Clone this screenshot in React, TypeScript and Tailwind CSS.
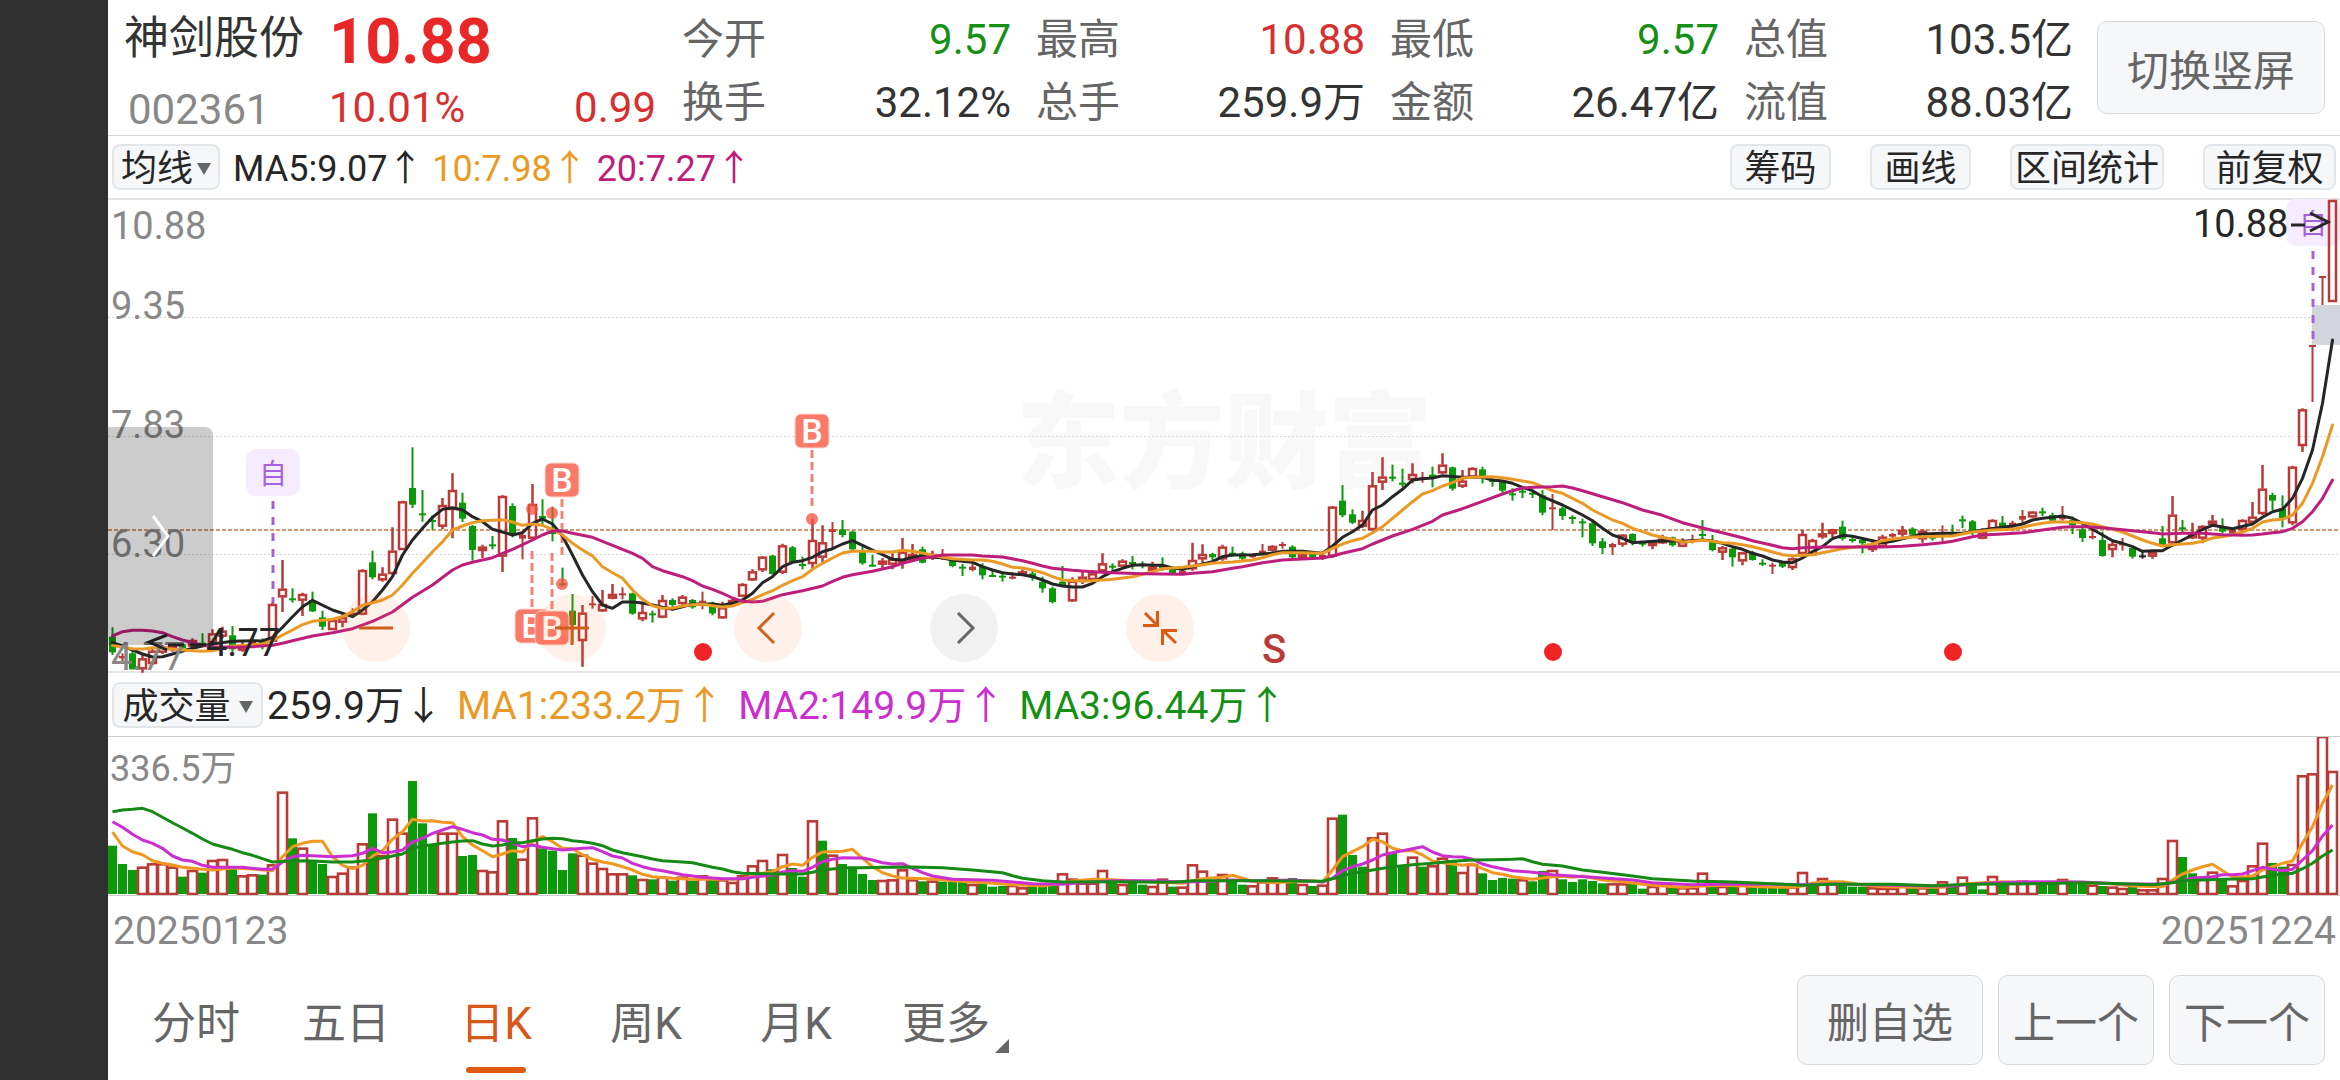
import React from "react";

/* Daily candles: colour (r/g/k), then high, body top, body bottom and low, in chart units (three per pixel). */
const CANDLES = `
g682,710,757,765 r760,768,775,790 g745,760,808,808 r760,775,808,818 r740,752,792,795 r735,740,758,762 r730,736,750,755 g728,733,745,750
r715,720,740,745 g700,728,735,740 r688,700,730,740 r680,692,710,715 g678,706,748,755 r720,738,752,755 r715,725,735,740 g715,722,740,748
r608,612,725,725 r480,566,592,636 g565,595,600,608 r578,582,602,648 g575,600,634,636 g632,652,680,690 r655,660,690,690 r645,652,668,682
r625,638,646,650 r508,510,644,646 g452,487,532,538 r502,521,541,545 r382,452,522,525 r302,304,450,450 g142,264,314,324 g270,340,346,365
g346,360,366,390 r294,315,380,388 r220,270,330,415 g278,308,356,366 g375,378,450,482 r434,440,453,474 g408,433,438,448 r286,288,470,516
g310,318,405,412 r400,405,416,478 r252,312,416,418 g298,348,356,380 g320,396,402,424 g503,550,556,560 g582,632,675,728 r615,638,723,800
r588,610,616,626 r570,612,634,636 r552,582,596,598 r562,580,586,598 g578,580,641,644 r610,636,658,664 g632,640,645,668 r585,600,653,655
g595,600,615,625 r585,590,612,615 g597,600,622,626 r575,602,606,628 g605,608,640,646 r605,622,655,656 r594,600,612,612 r550,552,590,592
r508,514,541,543 r468,470,511,516 g465,467,522,524 r431,436,518,522 g438,442,486,488 g470,492,498,508 r357,420,492,505 r376,427,473,486
r366,388,396,446 g360,388,405,412 g392,395,448,450 g440,456,490,494 g464,494,499,500 r474,482,494,510 r460,476,494,508 r414,455,488,506
r432,462,480,484 g440,448,488,490 r452,462,476,480 r447,464,474,480 g475,480,498,502 g492,500,504,528 r488,500,510,514 g490,500,526,538
g510,525,530,531 g518,527,531,545 r516,530,534,538 r508,514,526,528 g512,520,532,542 g530,545,565,578 g560,565,606,610 g498,545,558,562
r532,542,604,606 r516,530,545,552 r510,520,540,545 r460,490,514,520 g490,497,501,510 r478,482,500,505 g468,486,492,508 g484,492,498,505
r485,500,512,520 g472,498,504,512 g500,502,520,522 r505,512,520,524 r428,480,508,512 r433,462,478,488 g458,462,472,480 r434,440,478,482
g440,458,464,470 g455,460,476,480 r462,466,472,474 r432,452,460,466 r436,438,452,458 r426,432,436,446 g436,440,472,474 r455,462,474,478
g455,462,472,476 r455,465,474,480 r318,320,470,474 g255,302,346,352 g328,343,368,372 r332,360,380,384 r216,256,390,392 r172,230,248,270
g194,230,236,244 g206,248,254,262 r190,222,240,250 r216,232,240,248 g200,224,232,262 r160,194,220,222 g200,202,266,272 r210,242,260,264
r202,204,232,234 g200,208,228,250 g234,240,244,260 g240,246,272,278 g265,280,284,302 g262,272,276,294 g268,278,282,294 g270,286,338,346
r282,322,328,390 g320,325,348,360 g346,351,356,372 g356,364,368,412 g358,370,430,438 g414,424,444,462 r428,432,442,465 r402,404,434,440
g400,402,428,436 g424,428,432,440 r420,425,438,448 r404,416,430,432 g410,412,436,440 r415,424,440,442 r404,420,426,430 g360,402,408,418
g405,425,450,454 r438,442,458,480 g440,446,472,500 r455,457,484,496 g452,458,480,482 g478,488,492,498 r488,494,500,522 g484,488,500,504
r472,475,504,510 r390,402,462,465 r416,420,466,468 r368,400,412,416 r386,388,402,412 g362,380,416,422 g412,417,421,428 g415,420,430,460
r425,434,450,456 r404,410,440,442 r399,402,410,414 r378,390,404,410 g382,386,404,408 r388,392,418,428 g400,410,414,422 r376,398,402,426
g374,398,402,408 g347,358,362,384 g360,364,392,406 r385,395,416,418 r358,360,388,392 g348,368,380,384 r362,368,378,394 r330,348,359,370
r333,335,352,354 g323,334,338,348 g338,345,362,364 r318,348,358,362 g350,360,376,402 g376,388,414,426 r385,408,414,418 g395,420,468,470
r426,432,450,472 r414,430,436,452 g440,444,470,476 k452,466,472,476 r450,456,470,476 g378,415,435,440 r288,344,430,440 g360,382,388,400
r368,400,415,418 r376,378,416,430 r345,362,374,378 g355,380,395,400 r385,390,400,402 r358,360,390,392 r306,350,368,372 r195,266,342,346
g278,285,302,330 g286,325,354,382 r197,200,370,376 r25,28,138,156 r-165,-165,-161,6 r-372,-372,-368,-285 r-600,-600,-294,-294`;

const MA5 = `0,728 1,738 2,750 3,762 4,771 5,770 6,762 8,745 9,738 10,732 12,724 14,722 15,723 16,712 17,682 18,650 19,620 20,601 22,630 24,650 25,630 26,605 27,570 28,530 29,465 30,420 31,385 32,352 33,328 34,323 35,330 36,350 37,365 38,388 39,396 40,405 41,398 42,370 43,357 44,372 45,408 46,465 47,525 48,575 49,615 50,625 51,606 52,606 53,609 54,615 55,622 56,628 57,620 58,612 60,612 61,616 62,610 63,600 64,580 65,548 66,530 67,500 68,487 69,482 70,472 71,455 72,446 73,432 74,422 75,436 76,450 77,464 78,478 79,480 80,472 81,468 82,470 83,474 84,480 85,484 86,487 87,500 88,510 89,518 90,522 91,524 92,530 93,540 94,552 95,558 96,561 97,561 98,550 99,530 100,515 101,505 102,496 103,494 104,496 105,496 106,504 107,508 108,500 109,492 110,485 111,470 112,465 114,464 116,460 117,454 119,454 121,460 122,438 123,412 124,395 125,375 126,330 127,315 128,290 129,268 130,240 131,236 132,234 133,227 135,232 137,232 138,240 139,243 140,250 141,262 142,272 143,290 145,315 147,345 148,362 149,385 150,405 151,415 152,428 153,426 155,422 157,424 159,420 160,423 161,430 162,440 163,448 164,460 165,468 166,480 167,486 168,488 169,474 170,455 171,440 172,416 173,406 174,409 176,422 177,428 178,424 179,416 181,402 183,400 185,400 187,390 189,382 190,378 191,372 192,360 193,355 194,352 195,348 196,355 197,370 198,388 199,405 200,422 201,430 202,440 203,454 204,452 205,452 206,435 207,420 208,405 209,388 210,376 212,386 214,372 215,352 216,335 217,328 218,295 219,235 220,150 221,10 222,-180`;

const MA10 = `0,736 1,742 2,746 3,747 4,744 5,744 6,748 8,752 9,754 10,752 12,738 14,735 15,732 16,722 17,705 18,690 19,674 20,664 22,658 23,650 24,635 25,616 26,608 27,600 28,585 29,555 30,520 31,488 32,455 33,425 34,390 35,378 36,368 37,362 39,359 40,366 41,376 42,372 43,376 44,388 45,405 46,430 47,450 48,468 49,500 50,518 51,535 52,570 53,598 54,617 55,625 56,624 57,618 58,614 59,613 60,617 61,621 62,618 63,608 64,598 65,584 66,572 67,556 68,542 69,530 70,508 71,490 72,474 73,459 74,454 76,454 77,456 78,456 79,451 80,454 81,459 82,466 83,472 84,476 86,480 87,480 88,484 89,492 90,502 91,504 92,510 93,518 94,530 95,540 97,543 98,542 99,540 100,538 101,534 102,530 104,515 105,506 107,502 108,498 109,494 110,490 112,486 114,480 115,473 116,464 117,458 119,458 121,460 122,445 123,432 124,422 125,415 126,398 127,380 128,355 129,330 130,305 131,282 132,272 133,258 134,248 135,234 136,232 138,230 139,233 140,238 141,243 142,248 143,260 144,272 145,280 146,295 147,310 148,330 149,345 150,360 151,370 152,385 153,395 154,405 155,412 156,418 157,426 158,424 159,421 160,424 161,428 162,430 163,434 164,440 165,448 166,456 167,464 168,467 169,466 170,464 171,458 172,452 173,446 175,438 176,432 177,422 178,417 180,411 181,410 184,408 186,396 188,390 190,388 191,382 192,375 193,370 194,366 196,366 197,368 198,372 199,380 200,388 201,396 202,408 203,420 204,430 205,438 206,434 208,430 209,424 210,414 211,410 212,404 213,396 214,385 215,366 216,360 217,358 218,345 219,310 220,250 221,170 222,75`;

const MA20 = `0,708 1,695 2,691 3,691 4,693 5,698 6,710 7,720 8,728 9,736 10,740 12,742 14,740 16,736 17,730 18,722 20,708 22,698 24,686 26,664 28,636 30,592 32,555 34,510 35,495 36,487 38,473 40,448 42,420 43,405 44,393 45,393 46,400 48,412 50,436 52,460 53,475 54,500 55,512 57,530 58,542 59,558 60,568 61,580 62,594 63,604 64,606 65,604 66,594 67,584 69,572 71,558 72,544 73,532 74,524 76,514 78,500 79,490 80,482 81,474 82,470 83,465 86,465 87,468 89,471 91,482 92,490 93,498 94,505 96,511 98,515 100,518 103,521 107,523 108,520 110,515 112,505 113,500 115,488 117,480 119,477 121,474 122,468 123,460 125,446 126,432 128,408 130,388 132,364 133,345 135,326 137,304 139,282 140,272 141,264 142,262 144,260 145,258 146,264 147,272 149,290 151,308 153,330 155,346 157,368 159,384 161,398 163,413 164,422 166,436 167,443 168,446 169,443 171,441 175,441 177,441 179,439 181,434 183,428 184,424 186,410 187,405 189,402 191,398 193,390 195,382 196,380 197,380 198,381 200,386 202,392 204,398 205,402 207,400 209,400 211,404 213,406 214,405 215,402 216,398 217,395 218,385 219,365 220,335 221,295 222,240`;

/* Daily volume: colour and bar top. */
const VOLUMES = `g497 g552 g570 r560 r550 r550 r560 g590 r570 g578 r540 r537 g560 r586 r583 g584 r553 r335 g475 r503 g540 g552 r588 r578 r560 r490 g400 r525 r416 r458 g303 g430 g492 r458 r458 g528 g525 r570 r574 r421 g474 r536 r412 g505 g512 g570 g520 r524 r548 r564 r580 r580 g586 r597 g598 r590 g602 r590 g602 r586 g598 r598 r606 r586 r556 r540 g568 r522 g564 g590 r421 g482 r524 g552 g560 g582 g600 r600 r598 r568 r598 g604 r602 g605 g600 g604 r612 g610 g620 g618 r615 r622 g618 g618 g618 r580 r596 r608 r608 r570 g605 r612 g605 g614 r618 r596 g620 r620 r553 r572 g600 r582 g604 g614 r616 r604 r592 r602 g594 r612 g618 r614 r413 g404 g525 g560 r472 r458 g518 g555 r530 g560 r556 r533 g545 r576 r552 g580 g600 g594 g596 r598 g604 g573 r570 g598 g606 g598 g603 g610 r610 r610 g612 g626 r618 r612 g618 r622 r622 r578 g612 r618 g612 r612 g620 g622 g622 g622 r620 r576 g615 r594 r608 g614 g620 g620 r622 r624 r624 r612 g622 r622 g620 r604 g614 r590 g608 g628 r588 g612 r608 r602 r608 g610 g612 r597 g608 g612 r614 g618 r620 r624 g620 r628 r628 r594 r480 g531 g580 r596 r575 g600 r616 r600 r556 r488 g549 g560 r552 r286 r280 r168 r273`;

const VMA1 = `0,456 1,498 2,515 3,524 4,542 5,550 6,555 7,562 9,568 10,570 12,564 14,567 16,572 17,530 18,500 19,490 20,484 21,484 22,530 23,556 24,566 25,556 26,528 27,512 28,478 29,455 30,418 31,423 32,422 33,427 34,428 35,470 36,495 37,512 38,530 39,522 40,512 41,516 42,485 43,470 44,485 45,505 46,506 47,524 48,538 49,546 50,551 51,560 52,570 53,583 54,590 56,595 58,598 60,598 62,598 63,596 64,588 65,580 66,575 67,560 68,552 69,556 70,532 71,516 72,515 73,514 74,508 75,535 76,560 77,578 78,588 79,594 82,597 84,602 86,606 88,610 90,614 93,618 95,610 96,603 98,598 100,599 102,602 104,606 106,608 107,610 108,602 109,596 111,592 112,586 113,595 114,604 116,608 118,605 120,602 121,606 122,570 123,530 124,515 125,500 126,478 127,485 128,505 129,512 130,512 131,525 132,543 133,548 134,552 135,556 136,552 137,566 138,578 139,583 140,590 141,594 142,598 143,594 144,590 145,589 146,592 147,588 148,594 149,600 151,605 153,613 155,618 157,622 159,618 161,616 163,618 165,620 167,622 168,622 169,618 170,610 171,605 173,605 175,615 177,620 180,622 183,622 185,612 187,608 189,605 192,608 195,606 198,608 200,612 202,618 205,620 206,600 207,582 208,570 209,560 210,553 211,572 212,590 213,592 214,588 215,570 216,560 217,550 218,543 219,490 220,440 221,370 222,315`;

const VMA2 = `0,425 1,442 2,463 3,480 4,490 5,505 6,528 7,540 8,544 9,556 10,562 11,562 13,562 15,568 16,568 17,546 18,530 19,526 22,530 24,527 25,520 26,505 27,518 28,516 29,510 30,486 31,475 32,460 33,450 34,440 35,448 36,458 37,465 38,478 39,480 40,490 41,500 42,495 43,502 44,506 45,510 47,505 48,503 49,515 50,528 51,534 52,550 53,560 54,568 55,572 56,578 57,584 58,588 59,592 61,596 63,596 64,592 66,585 67,576 68,572 69,574 70,562 71,545 72,538 73,533 75,534 76,540 77,548 78,552 79,551 80,565 81,578 82,588 84,598 88,601 90,606 92,611 95,613 97,608 100,602 104,602 107,606 110,604 112,600 114,603 118,600 121,606 122,595 123,572 124,560 125,552 126,540 127,525 128,518 129,512 130,506 131,500 132,516 133,527 134,530 135,531 136,538 137,552 138,560 139,566 140,572 142,577 144,584 146,588 148,592 152,600 154,608 158,614 162,612 166,613 169,614 172,612 176,614 182,618 184,618 188,608 192,605 197,606 201,612 205,612 207,602 208,594 210,590 211,584 212,584 213,582 214,572 215,562 216,568 217,572 218,568 219,540 220,512 221,468 222,435`;

const VMA3 = `0,395 1,390 2,388 3,385 4,395 5,412 6,428 7,444 8,460 9,477 10,492 11,500 12,508 13,518 14,526 15,536 16,546 18,542 20,543 22,546 24,546 26,540 28,528 29,522 30,505 31,498 32,494 33,490 34,486 35,483 36,482 37,492 38,498 39,495 40,488 41,488 42,482 43,477 44,475 45,476 46,482 47,485 48,490 49,497 50,510 51,518 52,524 53,530 54,537 55,542 57,546 58,548 59,555 60,562 61,567 62,575 63,580 65,581 67,582 69,582 70,577 71,570 73,564 75,563 77,562 80,561 83,563 86,570 89,578 90,587 91,595 93,602 95,606 100,605 106,607 108,602 114,602 121,604 122,596 124,580 126,570 128,560 130,554 132,550 134,544 136,540 138,539 140,538 141,536 142,545 143,553 145,558 147,570 149,577 152,588 154,596 158,603 162,606 166,611 169,616 172,613 178,613 182,617 186,613 192,611 197,608 201,611 204,614 206,608 207,602 209,600 211,598 214,596 216,586 218,580 219,566 220,550 221,528 222,510`;

const FONT = "font-[Roboto,'Noto_Sans_CJK_SC',sans-serif]";
const COLORS: Record<string, string> = { r: "#b93a36", g: "#0a9a0a", k: "#222222" };

const xAt = (i: number) => 112.5 + 10 * i;
const line = (data: string, top: number) =>
  data
    .split(" ")
    .map((p) => p.split(",").map(Number))
    .map(([i, v]) => `${xAt(i)},${(top + v / 3).toFixed(1)}`)
    .join(" ");

const candles = CANDLES.trim()
  .split(/\s+/)
  .map((c) => ({ color: c[0], v: c.slice(1).split(",").map((n) => 400 + Number(n) / 3) }));
const volumes = VOLUMES.split(" ").map((c) => ({ color: c[0], top: 680 + Number(c.slice(1)) / 3 }));

function Candle({ i, color, v }: { i: number; color: string; v: number[] }) {
  const [high, top, bottom, low] = v;
  const x = xAt(i);
  const c = COLORS[color];
  const h = bottom - top;
  if (color !== "r" || h < 4) {
    return (
      <g fill={c}>
        <rect x={x - 1} y={high} width={2} height={low - high} />
        <rect x={x - 3.5} y={top} width={7} height={Math.max(h, 2)} />
      </g>
    );
  }
  return (
    <g stroke={c} strokeWidth={2.5} fill="none">
      <path d={`M${x} ${high}V${top}M${x} ${bottom}V${low}`} />
      <rect x={x - 3.5} y={top + 1} width={7} height={h - 2} />
    </g>
  );
}

function SelfMark({ x, y, end }: { x: number; y: number; end: number }) {
  return (
    <g>
      <rect x={x - 27} y={y} width={54} height={47} rx={10} fill="#f5ecff" />
      <text x={x} y={y + 35} textAnchor="middle" fontSize={28} fill="#a463dc">自</text>
      <path d={`M${x} ${y + 52}V${end}`} stroke="#a463dc" strokeWidth={3} strokeDasharray="8 8" />
    </g>
  );
}

function BuyMark({ x, y, from, to, dot }: { x: number; y: number; from: number; to: number; dot: number }) {
  return (
    <g>
      <path d={`M${x} ${from}V${to}`} stroke="#f08575" strokeWidth={3} strokeDasharray="8 4" />
      <circle cx={x} cy={dot} r={6} fill="#f4503c" fillOpacity={0.75} />
      <rect x={x - 17} y={y} width={34} height={34} rx={6} fill="#fb7a69" stroke="#ffd9d2" />
      <text x={x} y={y + 29} textAnchor="middle" fontSize={34} fontWeight={500} fill="#fff">B</text>
    </g>
  );
}

function PriceChart() {
  return (
    <svg viewBox="108 200 2232 471" className="block h-auto w-full overflow-visible" role="img" aria-label="日K线图">
      <text x={1016} y={480} fontSize={104} fontWeight={900} fill="#f8f8f8">东方财富</text>
      <g stroke="#d8d8d8" strokeWidth={1} strokeDasharray="2 2">
        <path d="M108 317.5H2340M108 436.5H2340M108 554.5H2340" />
      </g>
      <path d="M108 530H2340" stroke="#d39a70" strokeWidth={2} strokeDasharray="4 2" />
      <rect x={2312} y={305} width={28} height={40} fill="#d2d5db" />
      <SelfMark x={273} y={449} end={603} />
      <SelfMark x={2313} y={199} end={345} />
      {candles.map((c, i) => (
        <Candle key={i} i={i} color={c.color} v={c.v} />
      ))}
      <BuyMark x={562} y={463} from={499} to={556} dot={584} />
      <BuyMark x={532} y={609} from={551} to={609} dot={509} />
      <BuyMark x={552} y={611} from={553} to={611} dot={513} />
      <BuyMark x={812} y={414} from={450} to={508} dot={519} />
      <g fill="none" strokeWidth={3} strokeLinejoin="round" strokeLinecap="round">
        <polyline points={line(MA5, 400)} stroke="#262626" />
        <polyline points={line(MA10, 400)} stroke="#ea9a24" />
        <polyline points={line(MA20, 400)} stroke="#bd1e7c" />
      </g>
      <g fontSize={38} fill="#888888">
        <text x={111} y={239}>10.88</text>
        <text x={111} y={319}>9.35</text>
        <text x={111} y={438}>7.83</text>
        <text x={111} y={557}>6.30</text>
        <text x={111} y={670}>4.77</text>
      </g>
      <g fontSize={38} fill="#262626">
        <text x={2193} y={237}>10.88</text>
        <text x={206} y={656}>4.77</text>
      </g>
      <g stroke="#262626" strokeWidth={3} fill="none">
        <path d="M2291 225H2305M2310 213L2328 222L2310 231" />
        <path d="M167 635L149 642L167 650M168 645H184M190 645H206" />
      </g>
      <g fill="#f02424">
        <circle cx={703} cy={652} r={9} />
        <circle cx={1553} cy={652} r={9} />
        <circle cx={1953} cy={652} r={9} />
      </g>
      <text x={1274} y={663} textAnchor="middle" fontSize={40} fontWeight={500} fill="#b93a36">S</text>
    </svg>
  );
}

function VolumeChart() {
  return (
    <svg viewBox="108 737 2232 158" className="block h-auto w-full" role="img" aria-label="成交量图">
      {volumes.map((b, i) =>
        b.color === "g" ? (
          <rect key={i} x={xAt(i) - 4.5} y={b.top} width={9} height={894 - b.top} fill={COLORS.g} />
        ) : (
          <rect key={i} x={xAt(i) - 4.5} y={b.top + 1} width={9} height={893 - b.top} fill="#fff" stroke={COLORS.r} strokeWidth={2.6} />
        ),
      )}
      <g fill="none" strokeWidth={3} strokeLinejoin="round">
        <polyline points={line(VMA1, 680)} stroke="#f0981f" />
        <polyline points={line(VMA2, 680)} stroke="#cc2fd0" />
        <polyline points={line(VMA3, 680)} stroke="#158a15" />
      </g>
      <text x={110} y={781} fontSize={36} fill="#888888">336.5万</text>
    </svg>
  );
}

const STATS = [
  ["今开", "9.57", "text-[#159015]"],
  ["最高", "10.88", "text-[#d63030]"],
  ["最低", "9.57", "text-[#159015]"],
  ["总值", "103.5亿", "text-[#333333]"],
  ["换手", "32.12%", "text-[#333333]"],
  ["总手", "259.9万", "text-[#333333]"],
  ["金额", "26.47亿", "text-[#333333]"],
  ["流值", "88.03亿", "text-[#333333]"],
];

const CHIP = "flex h-[46px] shrink-0 items-center justify-center rounded-lg border-2 border-[#e4e7ea] bg-[#f6f7f9] pt-1 text-[36px] leading-none whitespace-nowrap text-[#262626]";
const ACTION = "flex items-center justify-center rounded-[10px] border border-[#d6dadd] bg-[#f6f7f9] pt-2 text-[42px] leading-none whitespace-nowrap text-[#666666]";
const ROUND = "flex size-[68px] items-center justify-center rounded-full";

function Caret() {
  return (
    <svg viewBox="0 0 14 12" className="h-3 w-3.5" fill="#666666" aria-hidden="true">
      <path d="M0 0H14L7 12Z" />
    </svg>
  );
}

function ChartControls() {
  const icon = { viewBox: "0 0 34 34", className: "size-[34px]", fill: "none", strokeWidth: 3, "aria-hidden": true } as const;
  return (
    <div className="absolute bottom-[9px] left-[234px] flex gap-32">
      <button type="button" aria-label="缩小" className={`${ROUND} bg-[#ff6a20]/10`}>
        <svg {...icon} stroke="#d05f1a"><path d="M0 17H34" /></svg>
      </button>
      <button type="button" aria-label="放大" className={`${ROUND} bg-[#ff6a20]/10`}>
        <svg {...icon} stroke="#d05f1a"><path d="M0 17H34M17 0V34" /></svg>
      </button>
      <button type="button" aria-label="左移" className={`${ROUND} bg-[#ff6a20]/10`}>
        <svg {...icon} stroke="#d05f1a"><path d="M23 2L8 17L23 32" /></svg>
      </button>
      <button type="button" aria-label="右移" className={`${ROUND} bg-[#777777]/10`}>
        <svg {...icon} stroke="#666666"><path d="M11 2L26 17L11 32" /></svg>
      </button>
      <button type="button" aria-label="收起" className={`${ROUND} bg-[#ff6a20]/10`}>
        <svg {...icon} stroke="#dd5a10"><path d="M2 2L14 14M0 14.5H14.5V0M33 32L20 19.5M34 19.5H19.5V34" /></svg>
      </button>
    </div>
  );
}

const TABS = ["分时", "五日", "日K", "周K", "月K", "更多"];

export default function App() {
  return (
    <div className={`flex min-h-screen bg-[#303030] ${FONT}`}>
      <main className="ml-[108px] flex min-w-0 flex-1 flex-col bg-white">
        <header className="flex h-[136px] items-start border-b border-[#d4d4d4] pr-[15px]">
          <div className="grid w-[574px] shrink-0 grid-cols-[205px_1fr] pl-4">
            <h1 className="pt-[9px] text-[45px] leading-[60px] text-[#333333]">神剑股份</h1>
            <strong className="pt-3 text-[63px] leading-[60px] font-bold text-[#ea2727]">10.88</strong>
            <span className="pt-3 pl-1 text-[42px] leading-[52px] text-[#888888]">002361</span>
            <span className="flex justify-between pt-[10px] pr-[26px] text-[42px] leading-[52px] text-[#d63030]">
              <span>10.01%</span>
              <span>0.99</span>
            </span>
          </div>
          <dl className="grid flex-1 grid-cols-4 gap-x-[25px] pt-2 text-[42px] leading-[63px]">
            {STATS.map(([label, value, tone]) => (
              <div key={label} className="flex justify-between whitespace-nowrap">
                <dt className="text-[#666666]">{label}</dt>
                <dd className={tone}>{value}</dd>
              </div>
            ))}
          </dl>
          <button type="button" className={`${ACTION} mt-[21px] ml-6 h-[93px] w-[228px]`}>切换竖屏</button>
        </header>

        <section className="flex h-16 items-center justify-between border-b-2 border-[#e4e4e4] pr-1 pl-1">
          <div className="flex items-center text-[36px] leading-none whitespace-nowrap">
            <button type="button" className={`${CHIP} mr-[13px] w-[108px] gap-1`}>均线<Caret /></button>
            <span className="pt-1 text-[#262626]">MA5:9.07↑&nbsp;</span>
            <span className="pt-1 text-[#ea9a24]">10:7.98↑&nbsp;</span>
            <span className="pt-1 text-[#bd1e7c]">20:7.27↑</span>
          </div>
          <div className="flex gap-[39px]">
            <button type="button" className={`${CHIP} w-[101px]`}>筹码</button>
            <button type="button" className={`${CHIP} w-[101px]`}>画线</button>
            <button type="button" className={`${CHIP} w-[154px]`}>区间统计</button>
            <button type="button" className={`${CHIP} w-[133px]`}>前复权</button>
          </div>
        </section>

        <section className="relative border-b-2 border-[#e4e4e4]">
          <PriceChart />
          <ChartControls />
          <button type="button" aria-label="展开侧栏" className="absolute top-[227px] left-0 flex h-[218px] w-[105px] items-center justify-center rounded-tr-lg bg-black/20">
            <svg viewBox="0 0 18 42" className="h-[42px] w-[18px]" fill="none" stroke="#fff" strokeWidth={3} aria-hidden="true">
              <path d="M1 1L16 21L1 41" />
            </svg>
          </button>
        </section>

        <section className="flex h-16 items-center gap-[14px] border-b border-[#cccccc] pl-1 text-[39px] leading-none whitespace-nowrap">
          <div className="flex items-center">
            <button type="button" className={`${CHIP} mr-1 w-[151px] gap-2`}>成交量<Caret /></button>
            <span className="pt-1 text-[#262626]">259.9万↓</span>
          </div>
          <span className="pt-1 text-[#ea9a24]">MA1:233.2万↑</span>
          <span className="pt-1 text-[#cc2fd0]">MA2:149.9万↑</span>
          <span className="pt-1 text-[#159015]">MA3:96.44万↑</span>
        </section>

        <section className="border-b border-[#cccccc]">
          <VolumeChart />
        </section>

        <div className="flex h-[70px] items-center justify-between pr-1 pl-[5px] text-[39px] leading-none text-[#888888]">
          <time>20250123</time>
          <time>20251224</time>
        </div>

        <footer className="flex flex-1 items-start justify-between pt-[9px] pr-[15px] pl-[13px]">
          <nav className="flex text-[44px] leading-[98px]">
            {TABS.map((tab) => (
              <button
                key={tab}
                type="button"
                className={
                  tab === "日K"
                    ? "relative h-[98px] w-[150px] text-[#d8581a] after:absolute after:bottom-0 after:left-[45px] after:h-[6px] after:w-[60px] after:rounded-full after:bg-[#dd5a10]"
                    : "relative h-[98px] w-[150px] text-[#666666]"
                }
              >
                {tab}
                {tab === "更多" && (
                  <svg viewBox="0 0 14 14" className="absolute right-3 bottom-5 size-3.5" fill="#666666" aria-hidden="true">
                    <path d="M14 0V14H0Z" />
                  </svg>
                )}
              </button>
            ))}
          </nav>
          <div className="flex gap-[15px]">
            <button type="button" className={`${ACTION} h-[90px] w-[186px]`}>删自选</button>
            <button type="button" className={`${ACTION} h-[90px] w-[156px]`}>上一个</button>
            <button type="button" className={`${ACTION} h-[90px] w-[156px]`}>下一个</button>
          </div>
        </footer>
      </main>
    </div>
  );
}
